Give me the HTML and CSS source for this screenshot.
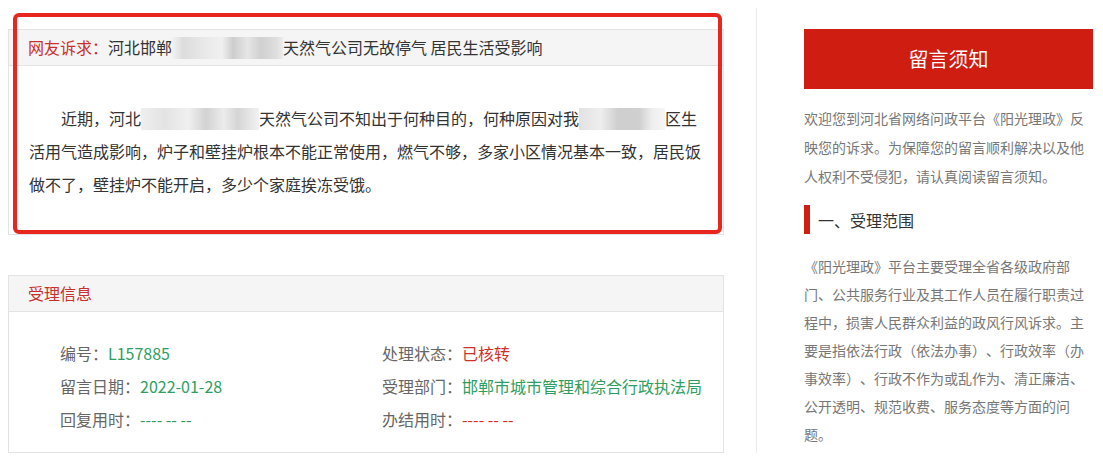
FILE: index.html
```html
<!DOCTYPE html>
<html>
<head>
    <meta charset="utf-8">
    <title>留言详情</title>
    <link rel="stylesheet" href="styles.css">
</head>
<body>
    <div class="page">
        <div class="main">
            <div class="card appeal">
                <div class="card-head">
                    <span class="head-label">网友诉求：</span>河北邯郸<span class="blur blur-title"></span>天然气公司无故停气 居民生活受影响
                </div>
                <div class="appeal-body">
                    <p>近期，河北<span class="blur blur-a"></span>天然气公司不知出于何种目的，何种原因对我<span class="blur blur-b"></span>区生活用气造成影响，炉子和壁挂炉根本不能正常使用，燃气不够，多家小区情况基本一致，居民饭做不了，壁挂炉不能开启，多少个家庭挨冻受饿。</p>
                </div>
                <div class="mark"></div>
            </div>

            <div class="card">
                <div class="card-head">
                    <span class="head-label">受理信息</span>
                </div>
                <div class="info-grid">
                    <div>编号：<span class="green">L157885</span></div>
                    <div>处理状态：<span class="red">已核转</span></div>
                    <div>留言日期：<span class="green">2022-01-28</span></div>
                    <div>受理部门：<span class="green">邯郸市城市管理和综合行政执法局</span></div>
                    <div>回复用时：<span class="green">---- -- --</span></div>
                    <div>办结用时：<span class="red">---- -- --</span></div>
                </div>
            </div>
        </div>

        <aside class="notice">
            <div class="notice-btn">留言须知</div>
            <p class="notice-intro">欢迎您到河北省网络问政平台《阳光理政》反映您的诉求。为保障您的留言顺利解决以及他人权利不受侵犯，请认真阅读留言须知。</p>
            <h3 class="notice-title">一、受理范围</h3>
            <p class="notice-text">《阳光理政》平台主要受理全省各级政府部门、公共服务行业及其工作人员在履行职责过程中，损害人民群众利益的政风行风诉求。主要是指依法行政（依法办事）、行政效率（办事效率）、行政不作为或乱作为、清正廉洁、公开透明、规范收费、服务态度等方面的问题。</p>
        </aside>
    </div>
</body>
</html>
```

FILE: styles.css
```css
* {
    box-sizing: border-box;
}

body {
    margin: 0;
    font-family: "Noto Sans CJK SC", "Noto Sans", sans-serif;
    background-color: #fff;
    color: #333;
    text-spacing-trim: space-all;
}

.page {
    display: flex;
    align-items: flex-start;
    padding: 8px 0 0 8px;
}

.main {
    width: 716px;
    padding-top: 21px;
}

.card {
    position: relative;
    border: 1px solid #e3e3e3;
    background-color: #fff;
}

.appeal {
    margin-bottom: 40px;
}

.card-head {
    height: 36px;
    line-height: 35px;
    padding: 0 19px;
    background-color: #f5f5f5;
    border-bottom: 1px solid #e3e3e3;
    font-size: 16px;
    color: #333;
    white-space: nowrap;
}

.head-label {
    color: #c9302c;
}

.blur {
    display: inline-block;
    height: 22px;
    vertical-align: -5px;
}

.blur-title {
    width: 111px;
    background: linear-gradient(90deg, #f3f3f3 0%, #dcdcdc 10%, #e9e9e9 30%, #f0f0f0 45%, #cdcdcd 55%, #e6e6e6 68%, #d0d0d0 80%, #dedede 94%, #ececec 100%);
}

.blur-a {
    width: 118px;
    background: linear-gradient(90deg, #efefef 0%, #e3e3e3 20%, #f0f0f0 40%, #d2d2d2 55%, #ececec 70%, #d5d5d5 82%, #f2f2f2 100%);
}

.blur-b {
    width: 86px;
    background: linear-gradient(90deg, #e2e2e2 0%, #eeeeee 25%, #cfcfcf 45%, #cfcfcf 70%, #eeeeee 85%, #f6f6f6 100%);
}

.appeal-body {
    padding: 36px 20px 33px;
}

.appeal-body p {
    margin: 0;
    font-size: 16px;
    line-height: 33px;
    text-indent: 2em;
    color: #333;
}

/* red highlight drawn over the appeal card */
.mark {
    position: absolute;
    left: 4px;
    top: -17px;
    right: 1px;
    bottom: 0;
    border: 4px solid #e8261d;
    border-radius: 6px;
    pointer-events: none;
}

.info-grid {
    display: grid;
    grid-template-columns: 322px 1fr;
    padding: 25px 0 16px 51px;
    font-size: 16px;
    line-height: 33px;
    color: #666;
}

.green {
    color: #2f9e62;
}

.red {
    color: #d0302a;
}

.notice {
    width: 347px;
    min-height: 445px;
    margin-left: 32px;
    padding: 21px 10px 0 47px;
    border-left: 1px solid #ececec;
}

.notice-btn {
    height: 60px;
    line-height: 60px;
    background-color: #cf1d12;
    color: #fff;
    text-align: center;
    font-size: 20px;
}

.notice-intro,
.notice-text {
    margin: 0;
    font-size: 14px;
    color: #777;
}

.notice-intro {
    margin-top: 15px;
    line-height: 29px;
}

.notice-title {
    display: flex;
    align-items: center;
    height: 29px;
    margin: 14px 0 0;
    padding-left: 8px;
    border-left: 6px solid #cf1d12;
    font-size: 16px;
    font-weight: normal;
    color: #333;
}

.notice-text {
    margin-top: 18px;
    line-height: 28px;
}
```
